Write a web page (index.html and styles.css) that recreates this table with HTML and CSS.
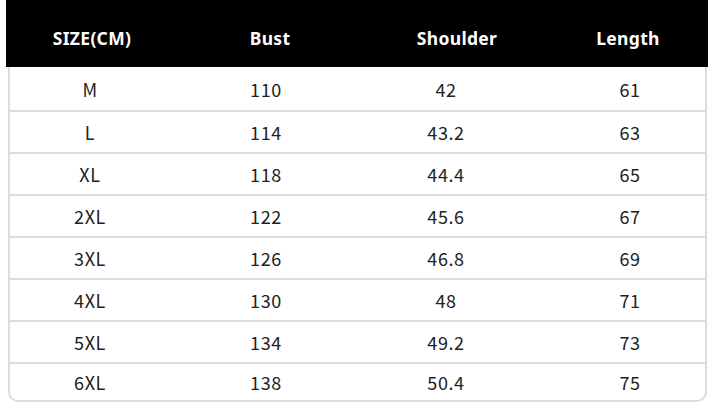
FILE: index.html
```html
<!DOCTYPE html>
<html>
<head>
<meta charset="utf-8">
<link rel="stylesheet" href="styles.css">
</head>
<body>
<div class="chart">
  <div class="head">
    <div class="hc">SIZE(CM)</div>
    <div class="hc">Bust</div>
    <div class="hc">Shoulder</div>
    <div class="hc">Length</div>
  </div>
  <div class="body">
    <div class="row"><div>M</div><div>110</div><div>42</div><div class="c4">61</div></div>
    <div class="row"><div>L</div><div>114</div><div>43.2</div><div class="c4">63</div></div>
    <div class="row"><div>XL</div><div>118</div><div>44.4</div><div class="c4">65</div></div>
    <div class="row"><div>2XL</div><div>122</div><div>45.6</div><div class="c4">67</div></div>
    <div class="row"><div>3XL</div><div>126</div><div>46.8</div><div class="c4">69</div></div>
    <div class="row"><div>4XL</div><div>130</div><div>48</div><div class="c4">71</div></div>
    <div class="row"><div>5XL</div><div>134</div><div>49.2</div><div class="c4">73</div></div>
    <div class="row"><div>6XL</div><div>138</div><div>50.4</div><div class="c4">75</div></div>
  </div>
</div>
</body>
</html>
```
FILE: styles.css
```css
html, body {
  margin: 0;
  padding: 0;
  background: #ffffff;
}
.chart {
  width: 708px;
  height: 408px;
  font-family: "Noto Sans CJK SC", "Noto Sans", sans-serif;
}
.head {
  margin-left: 6px;
  height: 67px;
  background: #000000;
  color: #ffffff;
  display: grid;
  grid-template-columns: 172px 184px 190px 1fr;
  padding-right: 4px;
  align-items: center;
  font-family: "Noto Sans", sans-serif;
  font-weight: 700;
  font-size: 17.5px;
  letter-spacing: 0.3px;
}
.hc {
  text-align: center;
  padding-top: 8px;
}
.body {
  margin-left: 8px;
  width: 695px;
  border: 2px solid #dcdcdc;
  border-top: 0;
  border-radius: 0 0 10px 10px;
}
.row {
  display: grid;
  grid-template-columns: 160px 192px 168px 175px;
  align-items: center;
  height: 40px;
  border-top: 2px solid #dcdcdc;
  font-size: 18px;
  letter-spacing: 0.6px;
  color: #222222;
  text-align: center;
}
.row:first-child {
  height: 43px;
  border-top: 0;
}
.row:last-child {
  height: 36px;
}
.c4 {
  padding-left: 25px;
}
```
